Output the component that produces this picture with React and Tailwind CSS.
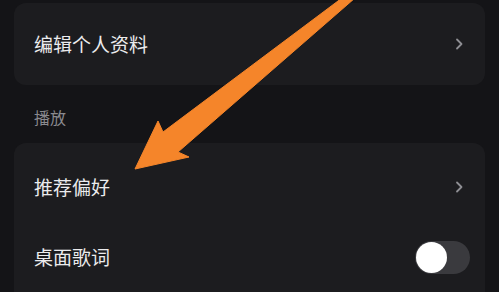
import React from 'react';

const Chevron = () => (
  <svg width="8" height="12" viewBox="0 0 8 12" fill="none">
    <path d="M2 1.5 L6.5 6 L2 10.5" stroke="#8e8e93" strokeWidth="1.8" strokeLinecap="round" strokeLinejoin="round" />
  </svg>
);

const Toggle = () => (
  <div className="w-[55px] h-[33px] rounded-full bg-[#3a3a3e] flex items-center px-[1px]">
    <div className="w-[31px] h-[31px] rounded-full bg-white" />
  </div>
);

const App = () => {
  return (
    <div
      className="relative w-[499px] h-[292px] overflow-hidden bg-[#141417] px-[14px]"
      style={{ fontFamily: '"Noto Sans CJK SC", "Noto Sans", sans-serif' }}
    >
      {/* Profile card */}
      <div className="mt-[3px] h-[82px] rounded-[12px] bg-[#1c1c1f] flex items-center justify-between pl-[20px] pr-[22px]">
        <span className="text-[19px] text-[#ebebed]">编辑个人资料</span>
        <Chevron />
      </div>

      {/* Section title */}
      <div className="h-[58px] flex items-center pl-[20px] pt-[6px]">
        <span className="text-[16px] text-[#8a8a8f]">播放</span>
      </div>

      {/* Playback card */}
      <div className="rounded-t-[12px] bg-[#1c1c1f] pt-[9px]">
        <div className="h-[70px] flex items-center justify-between pl-[20px] pr-[22px]">
          <span className="text-[19px] text-[#ebebed]">推荐偏好</span>
          <Chevron />
        </div>
        <div className="h-[70px] flex items-center justify-between pl-[20px] pr-[15px]">
          <span className="text-[19px] text-[#ebebed]">桌面歌词</span>
          <Toggle />
        </div>
      </div>

      {/* Annotation arrow */}
      <svg className="absolute inset-0 pointer-events-none" width="499" height="292" viewBox="0 0 499 292">
        <polygon
          points="342,-2 355,-2 178,152 189,157 135,169 158,121 163,132"
          fill="#f5852a"
          stroke="#f5852a"
          strokeWidth="1"
          strokeLinejoin="round"
        />
      </svg>
    </div>
  );
};

export default App;
